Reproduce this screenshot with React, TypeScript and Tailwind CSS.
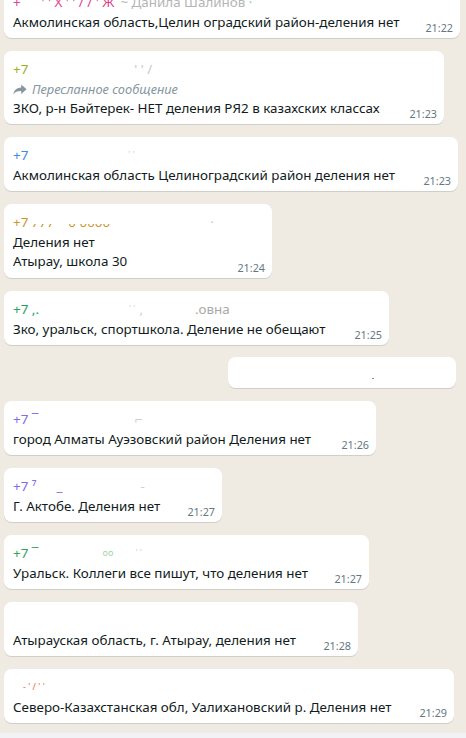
import React from "react";

type Msg = {
  w: string;
  sender: React.ReactNode;
  lines: string[];
  time: string;
  forwarded?: boolean;
  pb?: string;
};

const Frag = ({ c, children, cls = "" }: { c: string; children: React.ReactNode; cls?: string }) => (
  <span className={`${c} ${cls}`}>{children}</span>
);

const ForwardIcon = () => (
  <svg width="14" height="11" viewBox="0 0 14 11" className="mr-[5px] shrink-0">
    <path d="M8.2 0.6 L13.6 5.3 L8.2 10 L8.2 7.1 C4.6 7.0 2.1 8.0 0.4 10.4 C1.0 6.5 3.3 3.9 8.2 3.5 Z" fill="#8696a0" />
  </svg>
);

const msgs: Msg[] = [
  {
    w: "w-[456px] mt-[-16px]",
    sender: (
      <>
        <Frag c="text-[#e0428f]">+ &nbsp; &nbsp; &nbsp;' ' X ' ' / / ' Ж</Frag>
        <Frag c="text-[#b5b5b5] ml-[6px]">~ Данила Шалинов ·</Frag>
      </>
    ),
    lines: ["Акмолинская область,Целин оградский район-деления нет"],
    time: "21:22",
  },
  {
    w: "w-[440px]",
    forwarded: true,
    sender: (
      <>
        <Frag c="text-[#a1ad2c]">+7</Frag>
        <Frag c="text-[#c9c9c9] ml-[106px]">' ' /</Frag>
      </>
    ),
    lines: ["ЗКО, р-н Бәйтерек- НЕТ деления РЯ2 в казахских классах"],
    time: "21:23",
  },
  {
    w: "w-[454px]",
    sender: (
      <>
        <Frag c="text-[#3b8be8]">+7</Frag>
        <Frag c="text-[#e4c9c9] ml-[100px] text-[9px] align-top">' '</Frag>
      </>
    ),
    lines: ["Акмолинская область Целиноградский район деления нет"],
    time: "21:23",
  },
  {
    w: "w-[268px]",
    pb: "pb-[7px]",
    sender: (
      <>
        <Frag c="text-[#cf952f]">+7</Frag>
        <span className="inline-flex h-[7px] items-end overflow-hidden align-baseline ml-[3px]">
          <span className="text-[#cf952f] leading-[18px]">777 &nbsp;· 0 0000</span>
        </span>
        <Frag c="text-[#c9c9c9] ml-[100px]">·</Frag>
      </>
    ),
    lines: ["Деления нет", "Атырау, школа 30"],
    time: "21:24",
  },
  {
    w: "w-[385px]",
    sender: (
      <>
        <Frag c="text-[#22a45e]">+7 ,.</Frag>
        <Frag c="text-[#d0d0d0] ml-[90px] text-[9px] align-top">' '</Frag>
        <Frag c="text-[#d0d0d0] ml-[4px]">,</Frag>
        <Frag c="text-[#a9a9a9] ml-[52px]">.овна</Frag>
      </>
    ),
    lines: ["Зко, уральск, спортшкола. Деление не обещают"],
    time: "21:25",
  },
  {
    w: "w-[372px]",
    sender: (
      <>
        <Frag c="text-[#8468f0]">+7 ‾</Frag>
        <Frag c="text-[#cfcfcf] ml-[96px]">⌐</Frag>
      </>
    ),
    lines: ["город Алматы Ауэзовский район Деления нет"],
    time: "21:26",
  },
  {
    w: "w-[218px]",
    sender: (
      <>
        <Frag c="text-[#8468f0]">+7 ⁷</Frag>
        <Frag c="text-[#8468f0] ml-[20px]">_</Frag>
        <Frag c="text-[#d8c8d8] ml-[78px]">-</Frag>
      </>
    ),
    lines: ["Г. Актобе. Деления нет"],
    time: "21:27",
  },
  {
    w: "w-[365px]",
    sender: (
      <>
        <Frag c="text-[#2fa65c]">+7 ‾</Frag>
        <Frag c="text-[#9ed3a8] ml-[64px] text-[9px] align-top">oo</Frag>
        <Frag c="text-[#d0d0d0] ml-[22px] text-[9px] align-top">' '</Frag>
      </>
    ),
    lines: ["Уральск. Коллеги все пишут, что деления нет"],
    time: "21:27",
  },
  {
    w: "w-[354px]",
    sender: <span>&nbsp;</span>,
    lines: ["Атырауская область, г. Атырау, деления нет"],
    time: "21:28",
  },
  {
    w: "w-[450px]",
    sender: (
      <>
        <Frag c="text-[#f26a3a] ml-[10px] text-[9px] align-bottom">- ' / ' '</Frag>
      </>
    ),
    lines: ["Северо-Казахстанская обл, Уалихановский р. Деления нет"],
    time: "21:29",
  },
];

const Bubble = ({ m }: { m: Msg }) => (
  <div
    className={`relative ${m.w} rounded-[7.5px] bg-white pl-[9px] pr-[7px] pt-[7px] ${m.pb ?? "pb-[6px]"} shadow-[0_1px_0.5px_rgba(11,20,26,0.13)]`}
  >
    <div className="h-[22px] text-[13.4px] leading-[22px] whitespace-nowrap overflow-hidden">{m.sender}</div>
    {m.forwarded && (
      <div className="flex h-[19px] items-center text-[12.8px] italic text-[#8696a0]">
        <ForwardIcon />
        <span>Пересланное сообщение</span>
      </div>
    )}
    {m.lines.map((l, i) => (
      <div key={i} className="h-[19px] text-[13.4px] leading-[19px] text-[#111b21] whitespace-nowrap">
        {l}
      </div>
    ))}
    <span className="absolute bottom-[3px] right-[7px] text-[10.8px] leading-[15px] text-[#667781]">{m.time}</span>
  </div>
);

export default function App() {
  const first = msgs.slice(0, 5);
  const rest = msgs.slice(5);
  return (
    <div className="flex h-[738px] w-[466px] flex-col overflow-hidden bg-[#efeae2] font-['Segoe_UI','Noto_Sans','Open_Sans',sans-serif]">
      <div className="flex flex-1 flex-col gap-[13px] overflow-hidden pl-[4px]">
        {first.map((m, i) => (
          <Bubble key={i} m={m} />
        ))}
        <div className="relative mr-[10px] mt-[-1px] h-[31px] w-[228px] self-end rounded-[7.5px] bg-white shadow-[0_1px_0.5px_rgba(11,20,26,0.13)]">
          <span className="absolute left-[144px] top-[21px] h-[1px] w-[2px] bg-[#888]" />
        </div>
        {rest.map((m, i) => (
          <Bubble key={i} m={m} />
        ))}
      </div>
      <div className="h-[5px] bg-[#f0f2f5]" />
    </div>
  );
}
